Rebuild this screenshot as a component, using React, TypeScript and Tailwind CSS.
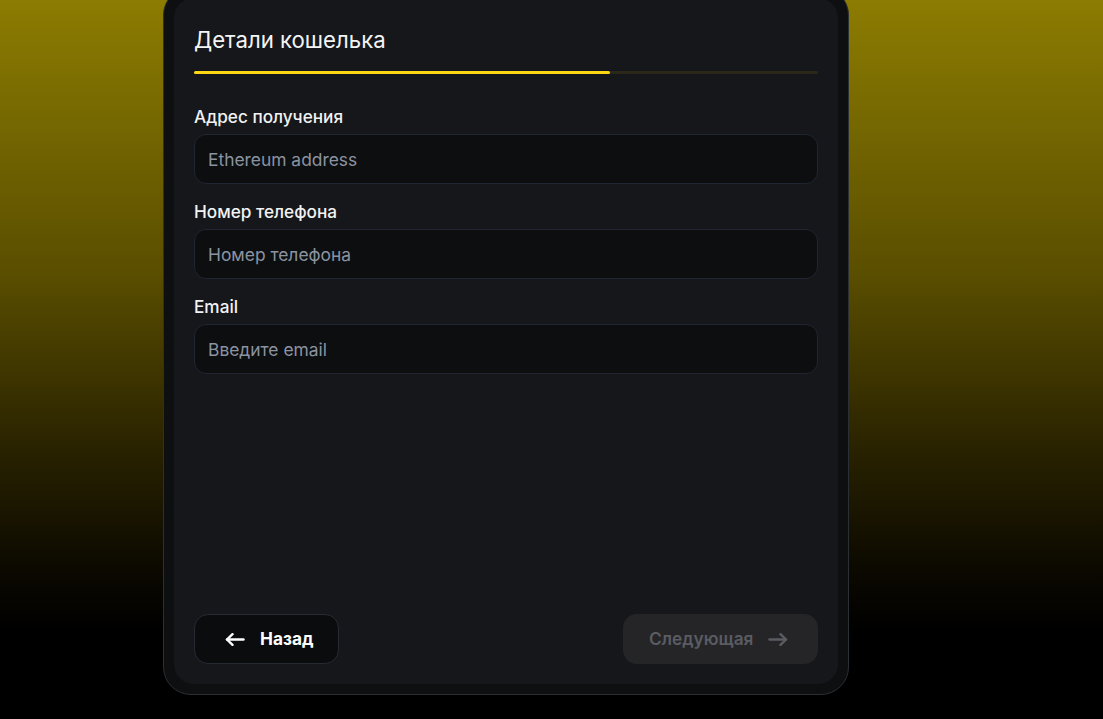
import React from "react"

type Field = {
  label: string
  placeholder: string
  type: string
}

const fields: Field[] = [
  { label: "Адрес получения", placeholder: "Ethereum address", type: "text" },
  { label: "Номер телефона", placeholder: "Номер телефона", type: "tel" },
  { label: "Email", placeholder: "Введите email", type: "email" },
]

function Arrow({ dir, className }: { dir: "left" | "right"; className?: string }) {
  return (
    <svg
      width="20"
      height="13"
      viewBox="0 0 20 13"
      fill="none"
      stroke="currentColor"
      strokeWidth="2.4"
      strokeLinecap="round"
      strokeLinejoin="round"
      className={className}
      style={dir === "right" ? { transform: "scaleX(-1)" } : undefined}
    >
      <path d="M2 6.5h16.5" />
      <path d="M7.5 1.2 2 6.5l5.5 5.3" />
    </svg>
  )
}

export default function App() {
  return (
    <div
      className="h-[719px] w-full overflow-hidden bg-[linear-gradient(to_bottom,#8c7c02_0%,#5a4e00_38%,#2a2300_62%,#0a0800_80%,#000_88%)]"
      style={{ fontFamily: "Inter, 'Noto Sans', sans-serif" }}
    >
      {/* Card frame */}
      <div className="ml-[163px] mt-[-13px] w-[686px] rounded-[28px] border border-[#2a3035] bg-[#0e0f11] p-[10px]">
        <div className="flex h-[686px] flex-col rounded-[20px] bg-[#15171b] px-5 pb-5 pt-[28px]">
          <h2 className="mb-[17px] text-[22.2px] font-normal leading-7 text-[#f4f4f5]">Детали кошелька</h2>

          {/* Progress */}
          <div className="mb-[31px] h-[3px] w-full rounded-full bg-[#2a2919]">
            <div className="h-full w-[66.7%] rounded-full bg-[#fdd615]" />
          </div>

          <div className="flex flex-1 flex-col gap-4">
            {fields.map((f) => (
              <div key={f.label} className="flex flex-col gap-[5px]">
                <label className="text-[17.2px] font-medium leading-6 text-[#f2f2f3]">{f.label}</label>
                <input
                  type={f.type}
                  placeholder={f.placeholder}
                  className="h-[50px] w-full rounded-xl border border-[#1f2631] bg-[#0d0e10] px-[13px] text-[17.4px] text-white outline-none placeholder:text-[#8b93a0]"
                />
              </div>
            ))}
          </div>

          {/* Footer buttons */}
          <div className="flex items-center justify-between">
            <button className="flex h-[50px] w-[145px] items-center gap-[15px] rounded-[14px] border border-[#262b33] bg-[#0b0c0e] pl-[30px] text-[17.3px] font-bold text-white">
              <Arrow dir="left" />
              <span>Назад</span>
            </button>
            <button
              disabled
              className="flex h-[50px] w-[195px] items-center gap-[15px] rounded-[14px] bg-[#252528] pl-[26px] text-[17.3px] font-semibold text-[#5a5c62]"
            >
              <span>Следующая</span>
              <Arrow dir="right" />
            </button>
          </div>
        </div>
      </div>
    </div>
  )
}
